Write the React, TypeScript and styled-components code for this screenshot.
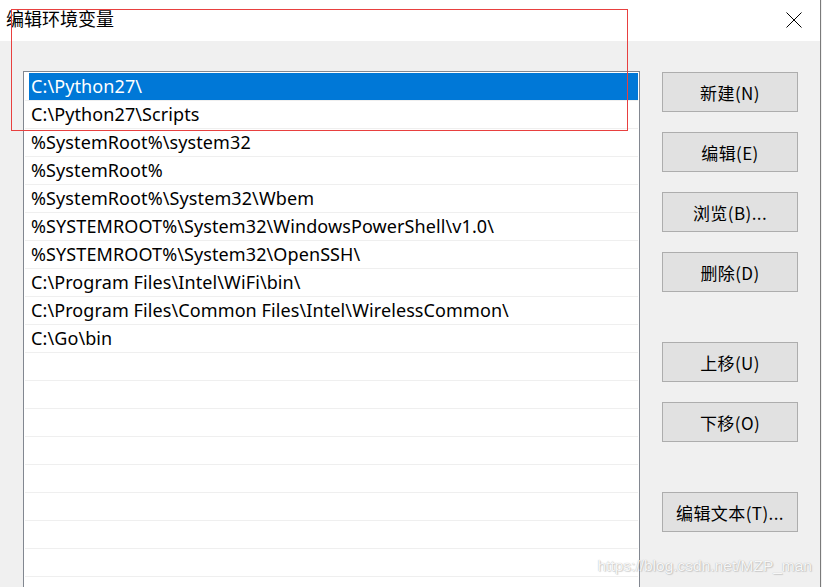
import React from "react";
import styled, { createGlobalStyle } from "styled-components";

const Global = createGlobalStyle`
  html, body { margin: 0; padding: 0; }
  body {
    width: 822px; height: 587px; overflow: hidden; background: #f0f0f0;
    font-family: "Noto Sans", "Noto Sans CJK SC", sans-serif;
  }
`;

const Window = styled.div`
  position: relative;
  width: 820px;
  height: 587px;
  background: #f0f0f0;
  border-right: 1px solid #7a7a7a;
  overflow: hidden;
  display: flex;
  flex-direction: column;
`;

const TitleBar = styled.div`
  height: 41px;
  background: #ffffff;
  display: flex;
  align-items: flex-start;
  justify-content: space-between;
  flex-shrink: 0;
`;

const Title = styled.div`
  font-family: "Noto Sans CJK SC", sans-serif;
  font-size: 18px;
  line-height: 20px;
  color: #000;
  padding: 8px 0 0 6px;
`;

const Close = styled.div`
  width: 16px;
  height: 16px;
  margin: 11px 18px 0 0;
`;

const Body = styled.div`
  display: flex;
  align-items: flex-start;
  padding: 30px 0 0 23px;
  flex: 1;
`;

const List = styled.div`
  width: 614px;
  height: 560px;
  background: #fff;
  border: 1px solid #828790;
  padding: 1px 0 0 1px;
  box-sizing: content-box;
  display: flex;
  flex-direction: column;
`;

const Row = styled.div`
  height: 27px;
  border-bottom: 1px solid #efefef;
  display: flex;
  flex-shrink: 0;
  width: 613px;
`;

const Cell = styled.div<{ $selected?: boolean }>`
  flex: 1;
  margin-left: 4px;
  padding-left: 2px;
  background: ${(p) => (p.$selected ? "#0078d7" : "transparent")};
  color: ${(p) => (p.$selected ? "#fff" : "#000")};
  font-family: "Noto Sans", "Noto Sans CJK SC", sans-serif;
  font-size: 18px;
  line-height: 27px;
  white-space: nowrap;
  letter-spacing: 0.1px;
`;

const Buttons = styled.div`
  display: flex;
  flex-direction: column;
  margin-left: 22px;
  margin-top: 1px;
`;

const Button = styled.div<{ $gap?: number }>`
  width: 134px;
  height: 38px;
  margin-top: ${(p) => p.$gap ?? 0}px;
  background: #e1e1e1;
  border: 1px solid #adadad;
  display: flex;
  align-items: center;
  justify-content: center;
  font-family: "Noto Sans CJK SC", sans-serif;
  font-size: 17px;
  letter-spacing: 0.4px;
  color: #000;
`;

const Annotation = styled.div`
  position: absolute;
  left: 11px;
  top: 9px;
  width: 615px;
  height: 120px;
  border: 1px solid #e8403f;
  pointer-events: none;
`;

const Watermark = styled.div`
  position: absolute;
  right: 8px;
  top: 557px;
  font-family: "Liberation Sans", Arial, sans-serif;
  font-size: 15.5px;
  white-space: nowrap;
  color: rgba(255, 255, 255, 0.92);
  text-shadow: 0 0 1px rgba(120, 120, 120, 0.6), 1px 1px 1px rgba(150, 150, 150, 0.35);
`;

const entries = [
  "C:\\Python27\\",
  "C:\\Python27\\Scripts",
  "%SystemRoot%\\system32",
  "%SystemRoot%",
  "%SystemRoot%\\System32\\Wbem",
  "%SYSTEMROOT%\\System32\\WindowsPowerShell\\v1.0\\",
  "%SYSTEMROOT%\\System32\\OpenSSH\\",
  "C:\\Program Files\\Intel\\WiFi\\bin\\",
  "C:\\Program Files\\Common Files\\Intel\\WirelessCommon\\",
  "C:\\Go\\bin",
];

const rows = [...entries, ...Array(10).fill("")];

const buttons: { label: string; gap: number }[] = [
  { label: "新建(N)", gap: 0 },
  { label: "编辑(E)", gap: 20 },
  { label: "浏览(B)...", gap: 20 },
  { label: "删除(D)", gap: 20 },
  { label: "上移(U)", gap: 50 },
  { label: "下移(O)", gap: 20 },
  { label: "编辑文本(T)...", gap: 50 },
];

export default function App() {
  return (
    <>
      <Global />
      <Window>
        <TitleBar>
          <Title>编辑环境变量</Title>
          <Close>
            <svg width="16" height="16" viewBox="0 0 16 16">
              <path d="M0.5 0.5 L15.5 15.5 M15.5 0.5 L0.5 15.5" stroke="#000" strokeWidth="1" fill="none" />
            </svg>
          </Close>
        </TitleBar>
        <Body>
          <List>
            {rows.map((r, i) => (
              <Row key={i}>
                <Cell $selected={i === 0}>{r}</Cell>
              </Row>
            ))}
          </List>
          <Buttons>
            {buttons.map((b) => (
              <Button key={b.label} $gap={b.gap}>
                {b.label}
              </Button>
            ))}
          </Buttons>
        </Body>
        <Annotation />
        <Watermark>https://blog.csdn.net/MZP_man</Watermark>
      </Window>
    </>
  );
}
